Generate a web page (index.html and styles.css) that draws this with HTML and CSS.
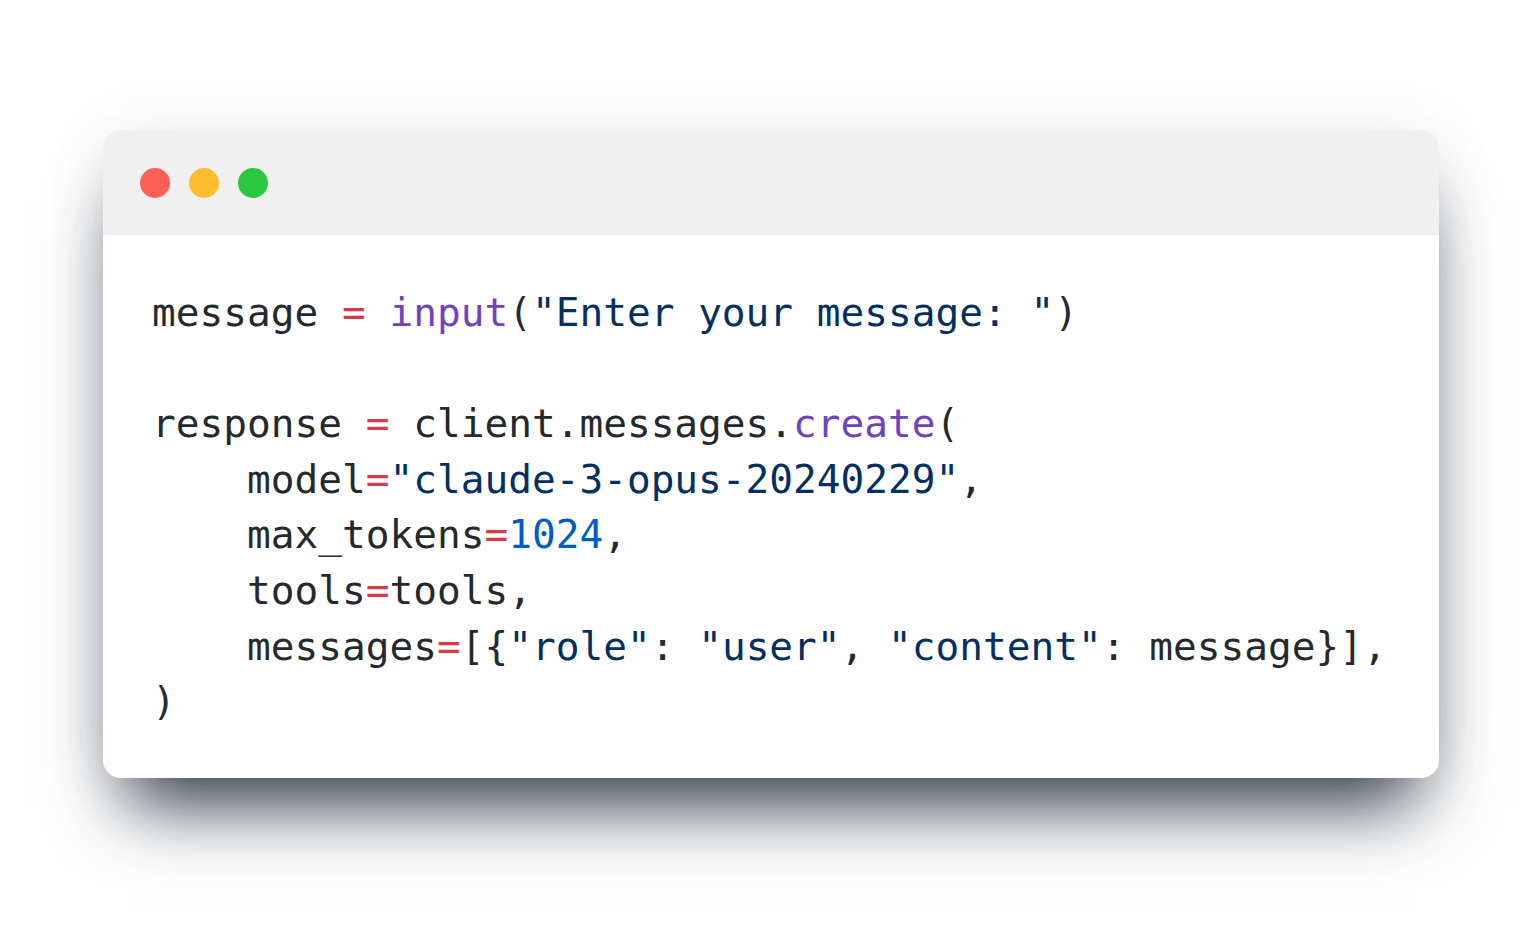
FILE: index.html
```html
<!DOCTYPE html>
<html lang="en">
<head>
<meta charset="utf-8">
<title>Code</title>
<link rel="stylesheet" href="styles.css">
</head>
<body>
<main class="stage">
  <section class="window">
    <header class="titlebar">
      <span class="dot dot-red"></span>
      <span class="dot dot-yellow"></span>
      <span class="dot dot-green"></span>
    </header>
    <pre class="code"><code>message <span class="op">=</span> <span class="fn">input</span>(<span class="str">"Enter your message: "</span>)

response <span class="op">=</span> client.messages.<span class="fn">create</span>(
    model<span class="op">=</span><span class="str">"claude-3-opus-20240229"</span>,
    max_tokens<span class="op">=</span><span class="num">1024</span>,
    tools<span class="op">=</span>tools,
    messages<span class="op">=</span>[{<span class="str">"role"</span>: <span class="str">"user"</span>, <span class="str">"content"</span>: message}],
)</code></pre>
  </section>
</main>
</body>
</html>
```

FILE: styles.css
```css
html, body {
  margin: 0;
  padding: 0;
  background: #ffffff;
}

.stage {
  display: flex;
  align-items: flex-start;
  padding: 130px 90px 0 103px;
  min-height: 942px;
  box-sizing: border-box;
}

.window {
  flex: 1;
  background: #ffffff;
  border-radius: 18px;
  overflow: hidden;
  box-shadow:
    0 48px 70px -23px rgba(20, 30, 45, 0.9),
    0 0 70px rgba(20, 30, 45, 0.06);
}

.titlebar {
  height: 105px;
  background: #f0f0f0;
  display: flex;
  align-items: center;
  gap: 19px;
  padding-left: 37px;
  box-sizing: border-box;
}

.dot {
  width: 30px;
  height: 30px;
  border-radius: 50%;
  display: block;
}

.dot-red { background: #ff5f57; }
.dot-yellow { background: #febc2e; }
.dot-green { background: #28c840; }

.code {
  margin: 0;
  padding: 50px 49px 48px 49px;
  font-family: "DejaVu Sans Mono", "Liberation Mono", monospace;
  font-size: 39.45px;
  line-height: 55.6px;
  color: #24292e;
  white-space: pre;
}

.code code {
  font-family: inherit;
}

.op { color: #d73a49; }
.fn { color: #6f42c1; }
.str { color: #032f62; }
.num { color: #005cc5; }
```
